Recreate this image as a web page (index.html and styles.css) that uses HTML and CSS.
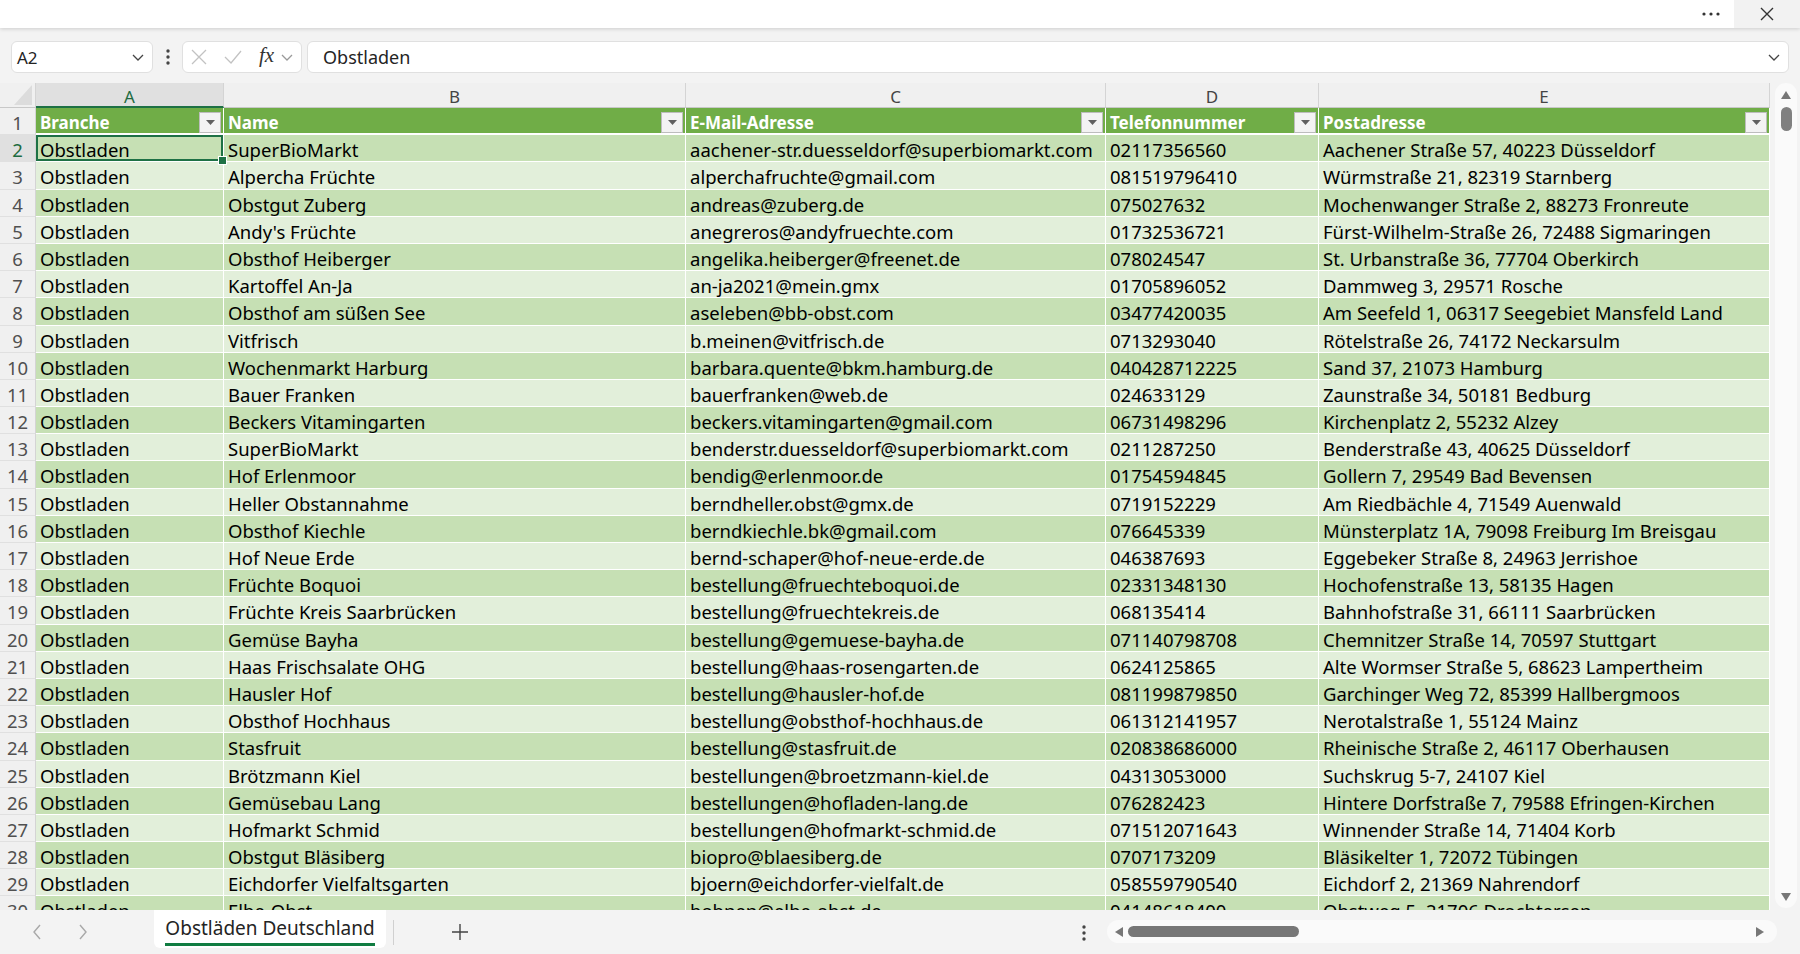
FILE: index.html
```html
<!DOCTYPE html>
<html lang="de">
<head>
    <meta charset="UTF-8">
    <title>Obstläden Deutschland</title>
    <link rel="stylesheet" href="styles.css">
</head>
<body>
    <!-- Titelleiste -->
    <div class="topbar">
        <div class="more">
            <svg width="18" height="4" viewBox="0 0 18 4"><circle cx="2" cy="2" r="1.6"/><circle cx="9" cy="2" r="1.6"/><circle cx="16" cy="2" r="1.6"/></svg>
        </div>
        <div class="close">
            <svg width="16" height="16" viewBox="0 0 16 16"><path d="M2 2l12 12M14 2L2 14"/></svg>
        </div>
    </div>

    <!-- Bearbeitungsleiste -->
    <div class="fbar">
        <div class="namebox">
            <span>A2</span>
            <svg class="chev" width="12" height="7" viewBox="0 0 12 7"><path d="M1 1l5 5 5-5"/></svg>
        </div>
        <div class="vdots">
            <svg width="4" height="16" viewBox="0 0 4 16"><circle cx="2" cy="2" r="1.7"/><circle cx="2" cy="8" r="1.7"/><circle cx="2" cy="14" r="1.7"/></svg>
        </div>
        <div class="fxbox">
            <svg class="ic-x" width="16" height="16" viewBox="0 0 16 16"><path d="M1 1l14 14M15 1L1 15"/></svg>
            <svg class="ic-ok" width="18" height="14" viewBox="0 0 18 14"><path d="M1 7l6 6L17 1"/></svg>
            <span class="fx">fx</span>
            <svg class="chev light" width="12" height="7" viewBox="0 0 12 7"><path d="M1 1l5 5 5-5"/></svg>
        </div>
        <div class="finput">
            <span>Obstladen</span>
            <svg class="chev" width="12" height="7" viewBox="0 0 12 7"><path d="M1 1l5 5 5-5"/></svg>
        </div>
    </div>

    <!-- Tabellenblatt -->
    <div class="sheet">
        <div class="grid-wrap">
            <div class="grid" id="grid"></div>
        </div>
        <div class="vscroll">
            <div class="vtrack">
                <svg class="tri" width="10" height="8" viewBox="0 0 10 8"><path d="M5 0L10 8H0z"/></svg>
                <div class="vthumb"></div>
                <div class="fill"></div>
                <svg class="tri" width="10" height="8" viewBox="0 0 10 8"><path d="M0 0h10L5 8z"/></svg>
            </div>
        </div>
    </div>

    <!-- Blattregister -->
    <div class="tabs">
        <svg class="nav first" width="10" height="16" viewBox="0 0 10 16"><path d="M8 1L2 8l6 7"/></svg>
        <svg class="nav" width="10" height="16" viewBox="0 0 10 16"><path d="M2 1l6 7-6 7"/></svg>
        <div class="tab"><span>Obstläden Deutschland</span></div>
        <div class="sep"></div>
        <svg class="plus" width="16" height="16" viewBox="0 0 16 16"><path d="M8 0v16M0 8h16"/></svg>
        <div class="spacer"></div>
        <svg class="hdots" width="4" height="16" viewBox="0 0 4 16"><circle cx="2" cy="2" r="1.7"/><circle cx="2" cy="8" r="1.7"/><circle cx="2" cy="14" r="1.7"/></svg>
        <div class="htrack">
            <svg width="8" height="10" viewBox="0 0 8 10"><path d="M0 5L8 0v10z"/></svg>
            <div class="hthumb"></div>
            <div class="fill"></div>
            <svg width="8" height="10" viewBox="0 0 8 10"><path d="M8 5L0 0v10z"/></svg>
        </div>
    </div>

    <script>
        // Tabellendaten
        const heads = ['Branche', 'Name', 'E-Mail-Adresse', 'Telefonnummer', 'Postadresse'];
        const data = [
            ['SuperBioMarkt', 'aachener-str.duesseldorf@superbiomarkt.com', '02117356560', 'Aachener Straße 57, 40223 Düsseldorf'],
            ['Alpercha Früchte', 'alperchafruchte@gmail.com', '081519796410', 'Würmstraße 21, 82319 Starnberg'],
            ['Obstgut Zuberg', 'andreas@zuberg.de', '075027632', 'Mochenwanger Straße 2, 88273 Fronreute'],
            ["Andy's Früchte", 'anegreros@andyfruechte.com', '01732536721', 'Fürst-Wilhelm-Straße 26, 72488 Sigmaringen'],
            ['Obsthof Heiberger', 'angelika.heiberger@freenet.de', '078024547', 'St. Urbanstraße 36, 77704 Oberkirch'],
            ['Kartoffel An-Ja', 'an-ja2021@mein.gmx', '01705896052', 'Dammweg 3, 29571 Rosche'],
            ['Obsthof am süßen See', 'aseleben@bb-obst.com', '03477420035', 'Am Seefeld 1, 06317 Seegebiet Mansfeld Land'],
            ['Vitfrisch', 'b.meinen@vitfrisch.de', '0713293040', 'Rötelstraße 26, 74172 Neckarsulm'],
            ['Wochenmarkt Harburg', 'barbara.quente@bkm.hamburg.de', '040428712225', 'Sand 37, 21073 Hamburg'],
            ['Bauer Franken', 'bauerfranken@web.de', '024633129', 'Zaunstraße 34, 50181 Bedburg'],
            ['Beckers Vitamingarten', 'beckers.vitamingarten@gmail.com', '06731498296', 'Kirchenplatz 2, 55232 Alzey'],
            ['SuperBioMarkt', 'benderstr.duesseldorf@superbiomarkt.com', '0211287250', 'Benderstraße 43, 40625 Düsseldorf'],
            ['Hof Erlenmoor', 'bendig@erlenmoor.de', '01754594845', 'Gollern 7, 29549 Bad Bevensen'],
            ['Heller Obstannahme', 'berndheller.obst@gmx.de', '0719152229', 'Am Riedbächle 4, 71549 Auenwald'],
            ['Obsthof Kiechle', 'berndkiechle.bk@gmail.com', '076645339', 'Münsterplatz 1A, 79098 Freiburg Im Breisgau'],
            ['Hof Neue Erde', 'bernd-schaper@hof-neue-erde.de', '046387693', 'Eggebeker Straße 8, 24963 Jerrishoe'],
            ['Früchte Boquoi', 'bestellung@fruechteboquoi.de', '02331348130', 'Hochofenstraße 13, 58135 Hagen'],
            ['Früchte Kreis Saarbrücken', 'bestellung@fruechtekreis.de', '068135414', 'Bahnhofstraße 31, 66111 Saarbrücken'],
            ['Gemüse Bayha', 'bestellung@gemuese-bayha.de', '071140798708', 'Chemnitzer Straße 14, 70597 Stuttgart'],
            ['Haas Frischsalate OHG', 'bestellung@haas-rosengarten.de', '0624125865', 'Alte Wormser Straße 5, 68623 Lampertheim'],
            ['Hausler Hof', 'bestellung@hausler-hof.de', '081199879850', 'Garchinger Weg 72, 85399 Hallbergmoos'],
            ['Obsthof Hochhaus', 'bestellung@obsthof-hochhaus.de', '061312141957', 'Nerotalstraße 1, 55124 Mainz'],
            ['Stasfruit', 'bestellung@stasfruit.de', '020838686000', 'Rheinische Straße 2, 46117 Oberhausen'],
            ['Brötzmann Kiel', 'bestellungen@broetzmann-kiel.de', '04313053000', 'Suchskrug 5-7, 24107 Kiel'],
            ['Gemüsebau Lang', 'bestellungen@hofladen-lang.de', '076282423', 'Hintere Dorfstraße 7, 79588 Efringen-Kirchen'],
            ['Hofmarkt Schmid', 'bestellungen@hofmarkt-schmid.de', '071512071643', 'Winnender Straße 14, 71404 Korb'],
            ['Obstgut Bläsiberg', 'biopro@blaesiberg.de', '0707173209', 'Bläsikelter 1, 72072 Tübingen'],
            ['Eichdorfer Vielfaltsgarten', 'bjoern@eichdorfer-vielfalt.de', '058559790540', 'Eichdorf 2, 21369 Nahrendorf'],
            ['Elbe-Obst', 'bohnen@elbe-obst.de', '04148618400', 'Obstweg 5, 21706 Drochtersen']
        ];

        const filterBtn = '<span class="flt"><svg width="9" height="5" viewBox="0 0 9 5"><path d="M0 0h9L4.5 5z"/></svg></span>';

        let html = '<div class="corner"></div>';
        ['A', 'B', 'C', 'D', 'E'].forEach((c, i) => {
            html += `<div class="colhead${i === 0 ? ' on' : ''}">${c}</div>`;
        });

        // Kopfzeile
        html += '<div class="rownum">1</div>';
        heads.forEach(h => { html += `<div class="cell th">${h}${filterBtn}</div>`; });

        // Datenzeilen
        data.forEach((row, i) => {
            const n = i + 2;
            const band = n % 2 === 0 ? 'dark' : 'light';
            html += `<div class="rownum${n === 2 ? ' on' : ''}">${n}</div>`;
            ['Obstladen', ...row].forEach((v, j) => {
                html += `<div class="cell ${band}${n === 2 && j === 0 ? ' sel' : ''}">${v}</div>`;
            });
        });

        document.getElementById('grid').innerHTML = html;
    </script>
</body>
</html>
```

FILE: styles.css
```css
/* Grundlayout */
* {
    box-sizing: border-box;
}

body {
    margin: 0;
    height: 954px;
    overflow: hidden;
    background: #f3f3f3;
    font-family: 'Noto Sans', 'Liberation Sans', sans-serif;
    color: #242424;
}

svg path {
    fill: none;
    stroke: currentColor;
}

/* Titelleiste */
.topbar {
    height: 28px;
    background: #fff;
    display: flex;
    justify-content: flex-end;
    position: relative;
    z-index: 2;
    box-shadow: 0 1px 4px rgba(0, 0, 0, 0.16);
}

.more {
    width: 47px;
    display: flex;
    align-items: center;
    justify-content: center;
    fill: #333;
}

.close {
    width: 66px;
    background: #f2f2f2;
    display: flex;
    align-items: center;
    justify-content: center;
    color: #333;
}

.close path {
    stroke-width: 1.4;
}

/* Bearbeitungsleiste */
.fbar {
    height: 55px;
    padding: 13px 11px 10px;
    display: flex;
    align-items: center;
}

.namebox,
.fxbox,
.finput {
    height: 32px;
    background: #fff;
    border: 1px solid #e0e0e0;
    border-radius: 6px;
    display: flex;
    align-items: center;
}

.namebox {
    width: 142px;
    padding: 0 8px 0 5px;
    justify-content: space-between;
    font-size: 17px;
}

.chev {
    color: #444;
}

.chev path {
    stroke-width: 1.3;
}

.chev.light {
    color: #9a9a9a;
}

.vdots {
    width: 29px;
    display: flex;
    justify-content: center;
    fill: #444;
}

.fxbox {
    width: 120px;
    margin-right: 5px;
    padding-left: 8px;
}

.ic-x {
    color: #c2c2c2;
}

.ic-ok {
    color: #c2c2c2;
    margin-left: 17px;
}

.ic-x path,
.ic-ok path {
    stroke-width: 1.3;
}

.fx {
    margin-left: 17px;
    margin-right: 7px;
    font-family: 'Liberation Serif', serif;
    font-style: italic;
    font-size: 21px;
    line-height: 1;
    color: #333;
    margin-top: -3px;
}

.finput {
    flex: 1;
    padding: 0 8px 0 15px;
    justify-content: space-between;
    font-size: 18px;
}

/* Tabellenblatt */
.sheet {
    height: 827px;
    display: flex;
}

.grid-wrap {
    width: 1770px;
    overflow: hidden;
}

.grid {
    display: grid;
    grid-template-columns: 36px 188px 462px 420px 213px 451px;
    grid-template-rows: 25px;
    grid-auto-rows: 27.2px;
}

.corner {
    background: #f0f0f0;
    border-bottom: 1px solid #c8c8c8;
    border-right: 1px solid #d4d4d4;
    position: relative;
}

.corner::after {
    content: "";
    position: absolute;
    right: 3px;
    bottom: 2px;
    width: 18px;
    height: 20px;
    background: #dcdcdc;
    clip-path: polygon(100% 0, 100% 100%, 0 100%);
}

.colhead {
    background: #f0f0f0;
    border-right: 1px solid #d4d4d4;
    border-bottom: 1px solid #c8c8c8;
    text-align: center;
    font-size: 17px;
    line-height: 27px;
    color: #444;
}

.colhead.on {
    background: #e0e0e0;
    color: #1e6b41;
    border-bottom: 2px solid #1e7145;
}

.rownum {
    background: #f0f0f0;
    border-bottom: 1px solid #e0e0e0;
    border-right: 1px solid #d4d4d4;
    text-align: center;
    font-size: 18.5px;
    line-height: 30px;
    color: #505050;
    overflow: hidden;
}

.rownum.on {
    background: #e0e0e0;
    color: #1e6b41;
}

.cell {
    padding-left: 4px;
    border-right: 1px solid #fff;
    border-bottom: 1px solid #fff;
    white-space: nowrap;
    overflow: hidden;
    font-size: 18.5px;
    line-height: 30px;
    color: #000;
}

.cell.dark {
    background: #c6e0b4;
}

.cell.light {
    background: #e2efda;
}

.cell.th {
    background: #70ad47;
    color: #fff;
    font-weight: 700;
    font-size: 17px;
    border-bottom-width: 2px;
    position: relative;
}

.flt {
    position: absolute;
    right: 2px;
    top: 4px;
    width: 22px;
    height: 21px;
    background: #f3f3f3;
    border: 1px solid #bdbdbd;
    display: flex;
    align-items: center;
    justify-content: center;
}

.flt path {
    fill: #606060;
    stroke: none;
}

/* ausgewählte Zelle */
.cell.sel {
    position: relative;
    overflow: visible;
    z-index: 3;
    box-shadow: inset 0 0 0 2px #1e7145;
}

.cell.sel::after {
    content: "";
    position: absolute;
    right: -4px;
    bottom: -4px;
    width: 7px;
    height: 7px;
    background: #1e7145;
    border: 1px solid #fff;
}

/* Bildlaufleisten */
.vscroll {
    width: 30px;
    padding-left: 5px;
}

.vtrack {
    width: 22px;
    height: 825px;
    background: #fafafa;
    border-radius: 11px;
    display: flex;
    flex-direction: column;
    align-items: center;
    padding: 8px 0 7px;
}

.tri path,
.htrack path {
    fill: #777;
    stroke: none;
}

.vthumb {
    width: 11px;
    height: 24px;
    margin-top: 8px;
    border-radius: 6px;
    background: #808080;
}

.fill {
    flex: 1;
}

/* Blattregister */
.tabs {
    height: 44px;
    display: flex;
    align-items: flex-start;
}

.nav {
    color: #a8a8a8;
    margin-top: 14px;
    margin-left: 36px;
}

.nav.first {
    margin-left: 32px;
}

.nav path,
.plus path {
    stroke-width: 1.4;
}

.tab {
    margin-left: 66px;
    width: 232px;
    height: 38px;
    background: #fff;
    border-radius: 0 0 6px 6px;
    display: flex;
    justify-content: center;
    padding-top: 6px;
    font-size: 19px;
    color: #242424;
}

.tab span {
    border-bottom: 3px solid #107c41;
    height: 30px;
    line-height: 25px;
}

.sep {
    width: 1px;
    height: 25px;
    margin: 10px 0 0 7px;
    background: #d0d0d0;
}

.plus {
    color: #444;
    margin: 14px 0 0 58px;
}

.spacer {
    flex: 1;
}

.hdots {
    fill: #444;
    margin-top: 15px;
}

.htrack {
    width: 670px;
    height: 23px;
    margin: 10px 23px 0 21px;
    background: #fafafa;
    border-radius: 12px;
    display: flex;
    align-items: center;
    padding: 0 13px 0 8px;
}

.hthumb {
    width: 171px;
    height: 11px;
    margin-left: 5px;
    border-radius: 6px;
    background: #777;
}
```
